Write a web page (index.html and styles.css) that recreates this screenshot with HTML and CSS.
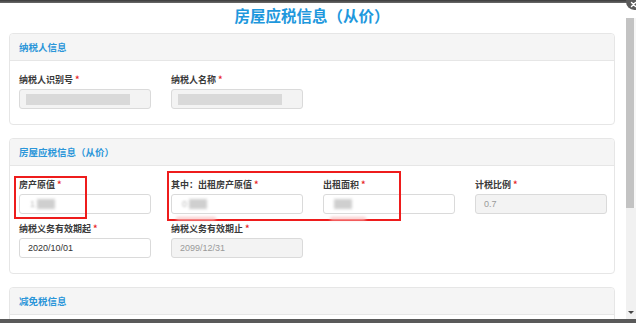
FILE: index.html
```html
<!DOCTYPE html>
<html lang="zh-CN">
<head>
<meta charset="utf-8">
<title>房屋应税信息（从价）</title>
<link rel="stylesheet" href="styles.css">
</head>
<body>
<div class="topbar"></div>
<div class="main">
  <div class="content">
    <h1 class="title">房屋应税信息（从价）</h1>

    <section class="panel">
      <div class="panel-head">纳税人信息</div>
      <div class="panel-body">
        <div class="row">
          <div class="field">
            <label>纳税人识别号<i>*</i></label>
            <div class="input disabled"><span class="mask"></span></div>
          </div>
          <div class="field">
            <label>纳税人名称<i>*</i></label>
            <div class="input disabled"><span class="mask"></span></div>
          </div>
        </div>
      </div>
    </section>

    <section class="panel panel-mark">
      <div class="panel-head">房屋应税信息（从价）</div>
      <div class="panel-body">
        <div class="row">
          <div class="field">
            <label>房产原值<i>*</i></label>
            <div class="input"><span class="blurval">1</span><span class="blur"></span></div>
          </div>
          <div class="field">
            <label>其中：出租房产原值<i>*</i></label>
            <div class="input"><span class="blurval">0</span><span class="blur"></span></div>
          </div>
          <div class="field">
            <label>出租面积<i>*</i></label>
            <div class="input"><span class="blur"></span></div>
          </div>
          <div class="field">
            <label>计税比例<i>*</i></label>
            <div class="input disabled">0.7</div>
          </div>
        </div>
        <div class="row row-2">
          <div class="field">
            <label>纳税义务有效期起<i>*</i></label>
            <div class="input">2020/10/01</div>
          </div>
          <div class="field">
            <label>纳税义务有效期止<i>*</i></label>
            <div class="input disabled">2099/12/31</div>
          </div>
        </div>
      </div>
      <div class="redbox box-1"></div>
      <div class="redbox box-2"></div>
      <div class="smudge smudge-1"></div>
      <div class="smudge smudge-2"></div>
    </section>

    <section class="panel">
      <div class="panel-head">减免税信息</div>
      <div class="panel-body"></div>
    </section>
  </div>
  <div class="scrollbar">
    <div class="sb-top"></div>
    <div class="thumb"></div>
    <div class="track"><span class="arrow"></span></div>
  </div>
</div>
<div class="bottombar"></div>
<div class="close">
  <svg width="17" height="17" viewBox="0 0 17 17"><circle cx="8.5" cy="8.5" r="8.5" fill="#5a5a5a"/><path d="M5.5 9.5 L9.5 13.5 M9.5 9.5 L5.5 13.5" stroke="#fff" stroke-width="1.4" stroke-linecap="round"/></svg>
</div>
</body>
</html>
```

FILE: styles.css
```css
html, body {
  margin: 0;
  padding: 0;
}
body {
  width: 636px;
  height: 323px;
  overflow: hidden;
  display: flex;
  flex-direction: column;
  background: #fff;
  font-family: "Noto Sans CJK SC", "Noto Sans", sans-serif;
  position: relative;
}
.topbar {
  flex: none;
  height: 3px;
  background: linear-gradient(#3a3a3a, #6a6a6a);
}
.bottombar {
  flex: none;
  height: 4px;
  background: #5a5a5a;
}
.main {
  flex: 1;
  min-height: 0;
  display: flex;
}
.content {
  flex: 1;
  overflow: hidden;
  padding: 0 11px 0 9px;
}
.title {
  margin: 0;
  padding-top: 2px;
  height: 20px;
  line-height: 20px;
  font-size: 15.5px;
  font-weight: 700;
  color: #1e98dd;
  text-align: center;
}
.panel {
  margin-top: 8px;
  border: 1px solid #e6e6e6;
  border-radius: 4px;
  background: #fff;
}
.panel + .panel {
  margin-top: 13px;
}
.panel-head {
  height: 26px;
  line-height: 26px;
  padding-left: 9px;
  background: #f5f5f5;
  border-bottom: 1px solid #e6e6e6;
  border-radius: 4px 4px 0 0;
  font-size: 9.5px;
  font-weight: 700;
  color: #2b96d9;
}
.panel-body {
  padding: 13px 9px 15px;
}
.row {
  display: grid;
  grid-template-columns: repeat(4, 132px);
  column-gap: 20px;
}
.row-2 {
  margin-top: 9px;
}
.field label {
  display: block;
  font-size: 9px;
  line-height: 12px;
  font-weight: 700;
  color: #3a3a3a;
  margin-bottom: 3px;
}
.field label i {
  font-style: normal;
  color: #e8262b;
  margin-left: 2px;
}
.input {
  box-sizing: border-box;
  height: 20px;
  border: 1px solid #dadada;
  border-radius: 3px;
  background: #fff;
  padding-left: 8px;
  display: flex;
  align-items: center;
  font-family: "Liberation Sans", Arial, sans-serif;
  font-size: 9px;
  color: #333;
}
.input.disabled {
  background: #f3f3f3;
  color: #9a9a9a;
}
.mask {
  display: block;
  margin-left: -2px;
  width: 104px;
  height: 11px;
  background: #d9d9d9;
}
.blurval {
  color: #bbb;
  filter: blur(0.8px);
  margin-left: 2px;
}
.blur {
  display: block;
  width: 18px;
  height: 10px;
  margin-left: 2px;
  background: #cfcfcf;
  filter: blur(1.4px);
}
.panel-mark {
  position: relative;
}
.redbox {
  position: absolute;
  border: 2px solid #ee1c1c;
  box-sizing: border-box;
}
.box-1 {
  left: 4px;
  top: 37px;
  width: 73px;
  height: 43px;
}
.box-2 {
  left: 157px;
  top: 32px;
  width: 234px;
  height: 50px;
}
.smudge {
  position: absolute;
  top: 78px;
  height: 3px;
  background: #f8c8c8;
  filter: blur(1.5px);
  border-radius: 2px;
}
.smudge-1 {
  left: 166px;
  width: 40px;
}
.smudge-2 {
  left: 320px;
  width: 36px;
}
.scrollbar {
  flex: none;
  width: 10px;
  display: flex;
  flex-direction: column;
  background: #f7f7f7;
}
.sb-top {
  height: 15px;
  background: #fff;
}
.thumb {
  height: 190px;
  width: 8px;
  background: #c3c3c3;
}
.track {
  flex: 1;
  background: #f1f1f1;
  display: flex;
  align-items: flex-end;
  justify-content: center;
  padding-bottom: 5px;
}
.arrow {
  width: 0;
  height: 0;
  border-left: 3px solid transparent;
  border-right: 3px solid transparent;
  border-top: 3px solid #444;
}
.close {
  position: absolute;
  left: 626px;
  top: -7px;
  width: 17px;
  height: 17px;
  line-height: 0;
}
```
